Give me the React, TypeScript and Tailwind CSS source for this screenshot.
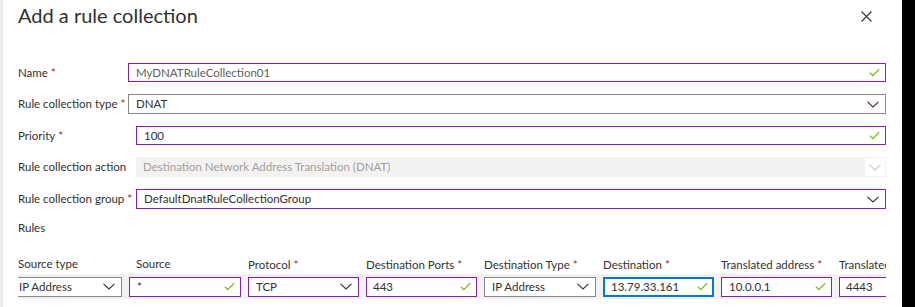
import React from "react";

const font = { fontFamily: 'Lato, "Segoe UI", "Noto Sans", sans-serif' };

function Check() {
  return (
    <svg width="11" height="9" viewBox="0 0 11 9" className="shrink-0">
      <path d="M0.8 4.6 L3.8 7.6 L10.2 1.2" fill="none" stroke="#6bb700" strokeWidth="1.1" />
    </svg>
  );
}

function Chevron({ color = "#323130" }: { color?: string }) {
  return (
    <svg width="12" height="7" viewBox="0 0 12 7" className="shrink-0">
      <path d="M0.5 0.8 L6 6 L11.5 0.8" fill="none" stroke={color} strokeWidth="1.1" />
    </svg>
  );
}

function Star() {
  return <span className="text-[#a4262c] ml-[3px]">*</span>;
}

function Label({ children, w, req }: { children: React.ReactNode; w: string; req?: boolean }) {
  return (
    <div className={`${w} shrink-0 text-[11.5px] text-[#323130] whitespace-nowrap`}>
      {children}
      {req && <Star />}
    </div>
  );
}

export default function App() {
  return (
    <div className="flex w-[915px] h-[307px] overflow-hidden bg-white" style={font}>
      <div className="w-[902px] h-full border-l-[3px] border-[#ececec] bg-white relative overflow-hidden">
        <div className="flex items-start justify-between pl-[15px] pr-[30px] pt-[1px]">
          <div className="text-[20px] leading-[28px] text-[#323130]">Add a rule collection</div>
          <svg width="11" height="11" viewBox="0 0 11 11" className="mt-[10px]">
            <path d="M0.5 0.5 L10.5 10.5 M10.5 0.5 L0.5 10.5" stroke="#323130" strokeWidth="1.1" />
          </svg>
        </div>

        <div className="flex flex-col pl-[15px] pr-[16px] mt-[34px] gap-[12px]">
          <div className="flex items-center">
            <Label w="w-[110px]" req>Name</Label>
            <div className="flex-1 h-[19px] border border-[#8a1fa5] flex items-center justify-between pl-[7px] pr-[5px] text-[11.5px] text-[#605e5c]">
              <span>MyDNATRuleCollection01</span>
              <Check />
            </div>
          </div>
          <div className="flex items-center">
            <Label w="w-[110px]" req>Rule collection type</Label>
            <div className="flex-1 h-[20px] border border-[#8a8886] flex items-center justify-between pl-[7px] pr-[6px] text-[11.5px] text-[#323130]">
              <span>DNAT</span>
              <Chevron />
            </div>
          </div>
          <div className="flex items-center">
            <Label w="w-[118px]" req>Priority</Label>
            <div className="flex-1 h-[19px] border border-[#8a1fa5] flex items-center justify-between pl-[7px] pr-[5px] text-[11.5px] text-[#323130]">
              <span>100</span>
              <Check />
            </div>
          </div>
          <div className="flex items-center">
            <Label w="w-[118px]">Rule collection action</Label>
            <div className="flex-1 h-[20px] bg-[#f3f2f1] flex items-center justify-between pl-[7px] pr-[1px] text-[11.5px] text-[#a19f9d]">
              <span>Destination Network Address Translation (DNAT)</span>
              <div className="w-[20px] h-[18px] bg-white flex items-center justify-center">
                <Chevron color="#c8c6c4" />
              </div>
            </div>
          </div>
          <div className="flex items-center">
            <Label w="w-[118px]" req>Rule collection group</Label>
            <div className="flex-1 h-[20px] border border-[#8a1fa5] flex items-center justify-between pl-[7px] pr-[6px] text-[11.5px] text-[#323130]">
              <span>DefaultDnatRuleCollectionGroup</span>
              <Chevron />
            </div>
          </div>
          <div className="text-[11.5px] text-[#323130] -mt-[2px]">Rules</div>
        </div>

        <div className="ml-[15px] w-[868px] overflow-hidden mt-[19px]">
          <div className="flex -ml-[7px] gap-[7px] text-[11.5px] text-[#323130] h-[18px] items-end">
            <div className="w-[111px] shrink-0 pl-[7px] self-start">Source type</div>
            <div className="w-[112px] shrink-0 pl-[7px] self-start">Source</div>
            <div className="w-[111px] shrink-0">Protocol<Star /></div>
            <div className="w-[111px] shrink-0">Destination Ports<Star /></div>
            <div className="w-[112px] shrink-0">Destination Type<Star /></div>
            <div className="w-[111px] shrink-0">Destination<Star /></div>
            <div className="w-[111px] shrink-0">Translated address<Star /></div>
            <div className="w-[111px] shrink-0 whitespace-nowrap">Translated port<Star /></div>
          </div>
          <div className="bg-[#f3f2f1] mt-[1px] h-[25px] flex items-center">
            <div className="flex -ml-[7px] gap-[7px] text-[11.5px] text-[#323130]">
              <div className="w-[111px] h-[20px] shrink-0 border border-[#8a8886] flex items-center justify-between pl-[7px] pr-[6px] bg-white">
                <span>IP Address</span><Chevron />
              </div>
              <div className="w-[112px] h-[20px] shrink-0 border border-[#8a1fa5] flex items-center justify-between pl-[7px] pr-[5px] bg-white">
                <span>*</span><Check />
              </div>
              <div className="w-[111px] h-[20px] shrink-0 border border-[#8a1fa5] flex items-center justify-between pl-[7px] pr-[6px] bg-white">
                <span>TCP</span><Chevron />
              </div>
              <div className="w-[111px] h-[20px] shrink-0 border border-[#8a1fa5] flex items-center justify-between pl-[6px] pr-[5px] bg-white">
                <span>443</span><Check />
              </div>
              <div className="w-[112px] h-[20px] shrink-0 border border-[#8a8886] flex items-center justify-between pl-[7px] pr-[6px] bg-white">
                <span>IP Address</span><Chevron />
              </div>
              <div className="w-[111px] h-[20px] shrink-0 border-2 border-[#0078d4] flex items-center justify-between pl-[6px] pr-[4px] bg-white">
                <span>13.79.33.161</span><Check />
              </div>
              <div className="w-[111px] h-[20px] shrink-0 border border-[#8a1fa5] flex items-center justify-between pl-[7px] pr-[5px] bg-white">
                <span>10.0.0.1</span><Check />
              </div>
              <div className="w-[111px] h-[20px] shrink-0 border border-[#8a1fa5] flex items-center justify-between pl-[6px] pr-[5px] bg-white">
                <span>4443</span>
              </div>
            </div>
          </div>
        </div>
      </div>
      <div className="flex-1 bg-black" />
    </div>
  );
}
